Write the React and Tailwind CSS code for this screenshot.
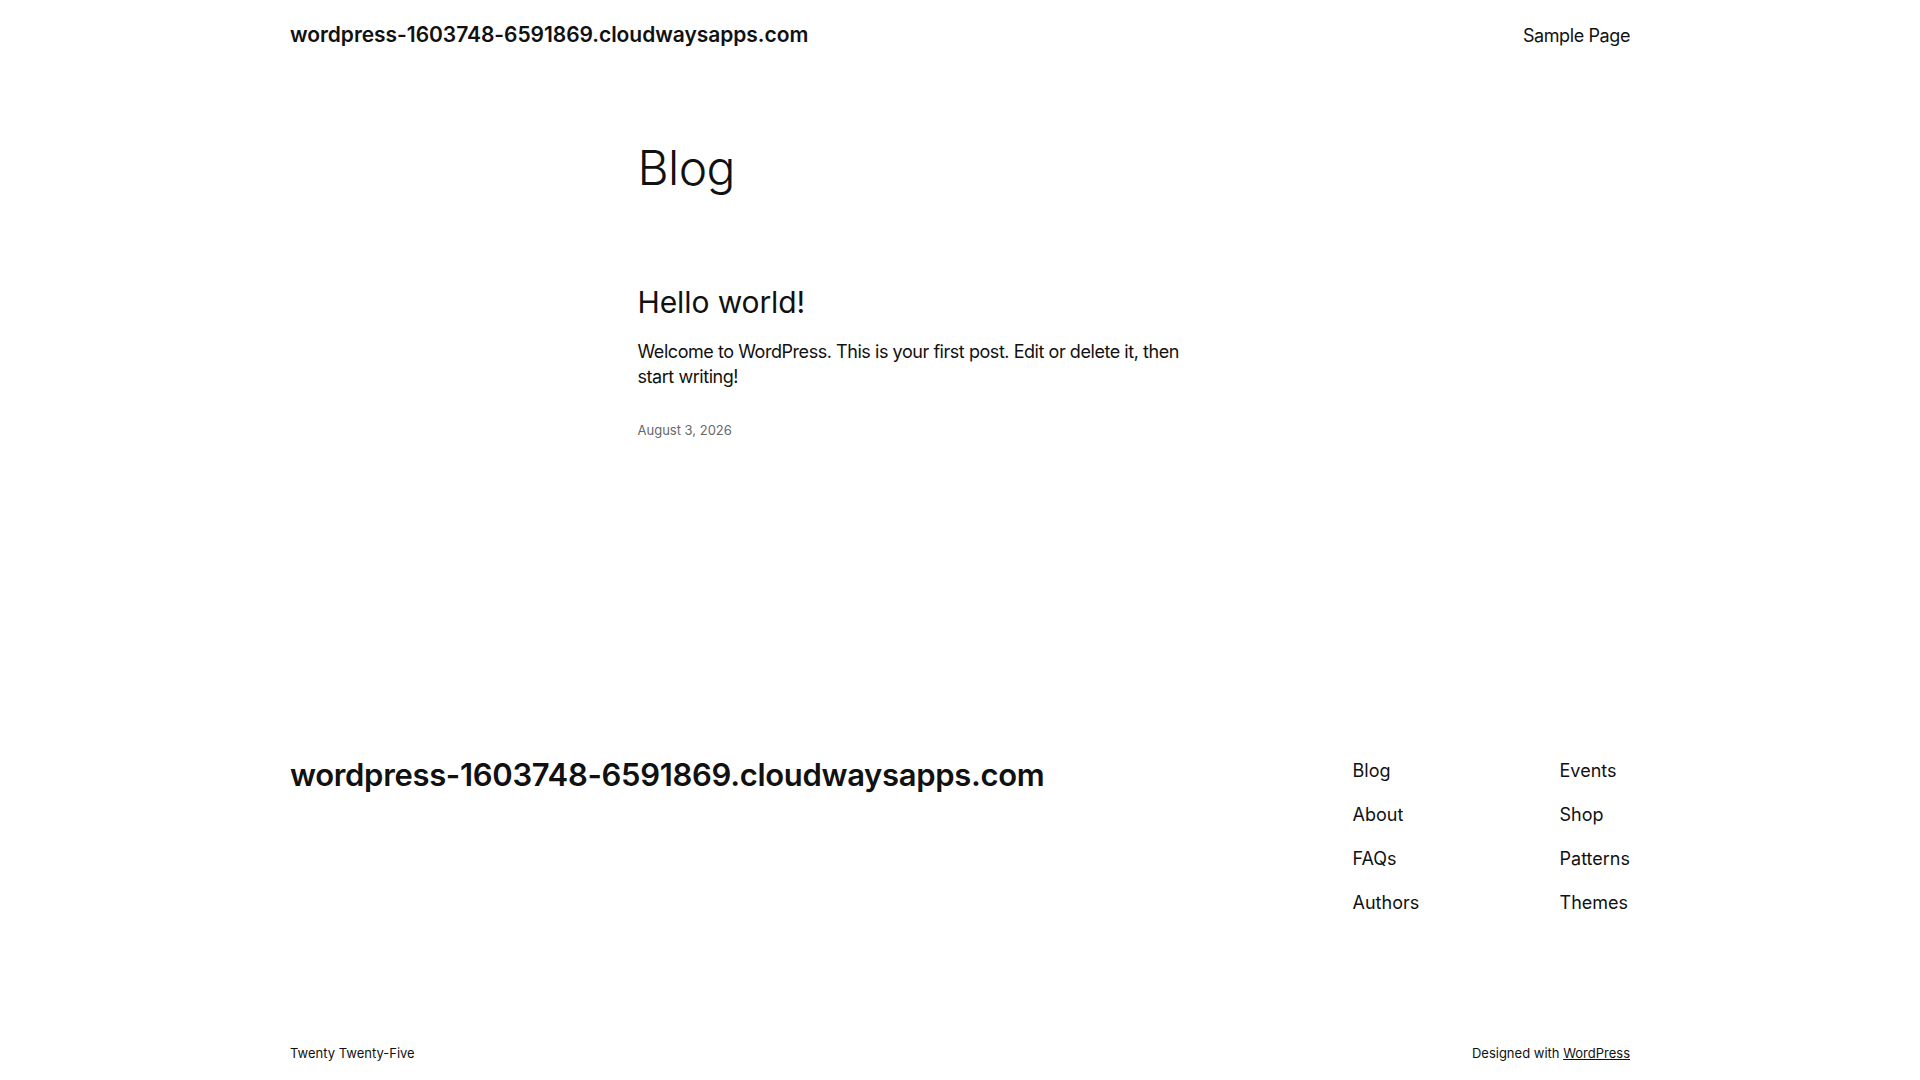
import React from 'react';

const footerLinks = [
  ['Blog', 'About', 'FAQs', 'Authors'],
  ['Events', 'Shop', 'Patterns', 'Themes'],
];

const App = () => {
  return (
    <div className="min-h-screen bg-white text-[#111111] font-['Inter','Liberation_Sans',sans-serif]">
      {/* header */}
      <header className="max-w-[1340px] mx-auto h-[68px] pt-[2px] flex items-center justify-between">
        <a href="#" className="text-[21px] font-semibold tracking-[-0.05px]">wordpress-1603748-6591869.cloudwaysapps.com</a>
        <nav>
          <a href="#" className="text-[18px] tracking-[-0.4px]">Sample Page</a>
        </nav>
      </header>

      {/* main */}
      <main className="w-[645px] mx-auto pt-[73px]">
        <h1 className="text-[48px] leading-[54px] font-light tracking-[-0.6px]">Blog</h1>
        <article className="mt-[90px]">
          <h2 className="text-[30px] leading-[34px] font-normal tracking-[-0.1px]">
            <a href="#">Hello world!</a>
          </h2>
          <p className="mt-[20px] max-w-[565px] text-[18px] leading-[25.2px] tracking-[-0.45px]">
            Welcome to WordPress. This is your first post. Edit or delete it, then start writing!
          </p>
          <div className="mt-[31px] text-[13px] leading-[20px] text-[#686868]">August 3, 2026</div>
        </article>
      </main>

      {/* footer */}
      <footer className="max-w-[1340px] mx-auto pt-[316px]">
        <div className="flex items-start justify-between">
          <a href="#" className="text-[31px] leading-[38px] font-semibold tracking-[-0.32px]">wordpress-1603748-6591869.cloudwaysapps.com</a>
          <div className="flex mt-[2px]">
            {footerLinks.map((col, i) => (
              <ul key={i} className={`flex flex-col gap-[18.8px] ${i === 0 ? 'w-[207px]' : ''}`}>
                {col.map((l) => (
                  <li key={l} className="text-[18px] leading-[25.2px]">
                    <a href="#">{l}</a>
                  </li>
                ))}
              </ul>
            ))}
          </div>
        </div>
        <div className="mt-[127px] flex justify-between text-[13px] leading-[20px]">
          <p>Twenty Twenty-Five</p>
          <p>
            Designed with <a href="#" className="underline">WordPress</a>
          </p>
        </div>
      </footer>
    </div>
  );
};

export default App;
